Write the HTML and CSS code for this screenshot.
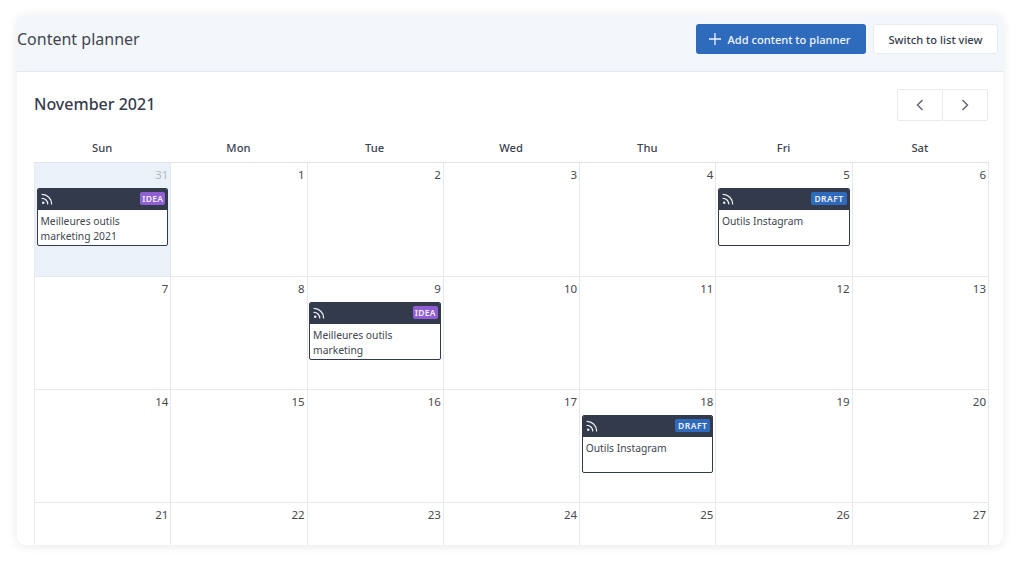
FILE: index.html
```html
<!DOCTYPE html>
<html lang="en">
<head>
<meta charset="utf-8">
<title>Content planner</title>
<link rel="stylesheet" href="styles.css">
</head>
<body>
<svg class="defs" width="0" height="0" aria-hidden="true">
  <symbol id="rss" viewBox="0 0 14 14">
    <circle cx="2.6" cy="11.4" r="1.5" fill="currentColor"/>
    <path d="M1.2 6.2a6.6 6.6 0 0 1 6.6 6.6M1.2 1.6a11.2 11.2 0 0 1 11.2 11.2" fill="none" stroke="currentColor" stroke-width="1.5" stroke-linecap="round"/>
  </symbol>
</svg>
<main class="card">
  <header class="topbar">
    <h1 class="title">Content planner</h1>
    <div class="actions">
      <button class="btn btn-primary">
        <svg class="plus" viewBox="0 0 12 12" width="12" height="12"><path d="M6 0v12M0 6h12" stroke="currentColor" stroke-width="1.3" fill="none"/></svg>
        Add content to planner
      </button>
      <button class="btn btn-light">Switch to list view</button>
    </div>
  </header>
  <section class="calendar">
    <div class="cal-head">
      <h2 class="month">November 2021</h2>
      <div class="nav">
        <button class="nav-btn"><svg viewBox="0 0 8 12" width="8" height="12"><path d="M6.5 1 1.5 6l5 5" stroke="currentColor" stroke-width="1.4" fill="none"/></svg></button>
        <button class="nav-btn"><svg viewBox="0 0 8 12" width="8" height="12"><path d="M1.5 1l5 5-5 5" stroke="currentColor" stroke-width="1.4" fill="none"/></svg></button>
      </div>
    </div>
    <div class="weekdays">
      <div>Sun</div><div>Mon</div><div>Tue</div><div>Wed</div><div>Thu</div><div>Fri</div><div>Sat</div>
    </div>
    <div class="grid">
      <div class="day other"><span class="num">31</span>
        <article class="event"><div class="event-bar"><svg class="rss" width="12" height="12"><use href="#rss"/></svg><span class="tag tag-idea">IDEA</span></div><p class="event-text">Meilleures outils marketing 2021</p></article>
      </div>
      <div class="day"><span class="num">1</span></div>
      <div class="day"><span class="num">2</span></div>
      <div class="day"><span class="num">3</span></div>
      <div class="day"><span class="num">4</span></div>
      <div class="day"><span class="num">5</span>
        <article class="event"><div class="event-bar"><svg class="rss" width="12" height="12"><use href="#rss"/></svg><span class="tag tag-draft">DRAFT</span></div><p class="event-text">Outils Instagram</p></article>
      </div>
      <div class="day"><span class="num">6</span></div>

      <div class="day"><span class="num">7</span></div>
      <div class="day"><span class="num">8</span></div>
      <div class="day"><span class="num">9</span>
        <article class="event"><div class="event-bar"><svg class="rss" width="12" height="12"><use href="#rss"/></svg><span class="tag tag-idea">IDEA</span></div><p class="event-text">Meilleures outils marketing</p></article>
      </div>
      <div class="day"><span class="num">10</span></div>
      <div class="day"><span class="num">11</span></div>
      <div class="day"><span class="num">12</span></div>
      <div class="day"><span class="num">13</span></div>

      <div class="day"><span class="num">14</span></div>
      <div class="day"><span class="num">15</span></div>
      <div class="day"><span class="num">16</span></div>
      <div class="day"><span class="num">17</span></div>
      <div class="day"><span class="num">18</span>
        <article class="event"><div class="event-bar"><svg class="rss" width="12" height="12"><use href="#rss"/></svg><span class="tag tag-draft">DRAFT</span></div><p class="event-text">Outils Instagram</p></article>
      </div>
      <div class="day"><span class="num">19</span></div>
      <div class="day"><span class="num">20</span></div>

      <div class="day"><span class="num">21</span></div>
      <div class="day"><span class="num">22</span></div>
      <div class="day"><span class="num">23</span></div>
      <div class="day"><span class="num">24</span></div>
      <div class="day"><span class="num">25</span></div>
      <div class="day"><span class="num">26</span></div>
      <div class="day"><span class="num">27</span></div>
    </div>
  </section>
</main>
</body>
</html>
```

FILE: styles.css
```css
* { box-sizing: border-box; }
html, body { height: 100%; }
body {
  margin: 0;
  padding: 15px 21px 19px 17px;
  background: #fff;
  color: #363d4d;
  font-family: "Noto Sans", "Open Sans", sans-serif;
  overflow: hidden;
}
.defs { position: absolute; }
.card {
  height: 530px;
  background: #fff;
  border-radius: 8px;
  box-shadow: 0 1px 10px rgba(40, 50, 70, 0.11);
  overflow: hidden;
  display: flex;
  flex-direction: column;
}
.topbar {
  height: 57px;
  flex: none;
  background: #f3f6fa;
  border-bottom: 1px solid #e5e8ec;
  display: flex;
  align-items: center;
  justify-content: space-between;
  padding: 0 5px 8px 0;
}
.title { margin: 0; font-size: 16px; font-weight: 400; color: #41474f; }
.actions { display: flex; gap: 7px; }
.btn {
  height: 30px;
  border-radius: 3px;
  font-family: inherit;
  font-size: 11.1px;
  font-weight: 500;
  display: flex;
  align-items: center;
  white-space: nowrap;
}
.btn-primary {
  width: 170px;
  justify-content: center;
  gap: 7px;
  padding: 0 3px 0 0;
  background: #2f6bbd;
  color: #f2f6fc;
  border: 0;
}
.btn-light {
  width: 125px;
  justify-content: center;
  background: #fff;
  color: #363d4d;
  border: 1px solid #e9ebef;
}
.calendar { flex: 1; min-height: 0; padding: 0 14px 0 17px; }
.cal-head {
  height: 63px;
  display: flex;
  align-items: center;
  justify-content: space-between;
  padding: 1px 1px 0 0;
}
.month { margin: 0; font-size: 16px; font-weight: 500; color: #363d4d; }
.nav { display: flex; margin-top: 2px; }
.nav-btn {
  width: 46px;
  height: 32px;
  background: #fff;
  border: 1px solid #e8eaee;
  color: #5d6470;
  display: flex;
  align-items: center;
  justify-content: center;
  padding: 0;
  border-radius: 2px;
}
.nav-btn + .nav-btn { margin-left: -1px; }
.weekdays {
  display: grid;
  grid-template-columns: repeat(7, 1fr);
  height: 27px;
  padding: 0 1px 2px 0;
  align-items: center;
  text-align: center;
  font-size: 11.2px;
  font-weight: 500;
  color: #3c424e;
}
.grid {
  display: grid;
  grid-template-columns: repeat(7, 1fr);
  grid-template-rows: 114px 113px 113px 113px;
  border-top: 1px solid #e2e4e8;
  border-left: 1px solid #e8eaed;
}
.day {
  border-right: 1px solid #e6e8eb;
  border-bottom: 1px solid #e6e8eb;
  padding: 4px 2px 0 1.5px;
  display: flex;
  flex-direction: column;
}
.day.other { background: #eaf1f9; }
.num {
  align-self: flex-end;
  font-size: 11.5px;
  line-height: 16px;
  color: #46494f;
  height: 21px;
}
.other .num { color: #b3b9c2; }
.event {
  height: 58px;
  background: #fff;
  border: 1px solid #333a4b;
  border-radius: 2px;
  overflow: hidden;
}
.event-bar {
  height: 21px;
  background: #333a4b;
  color: #e8ebf0;
  display: flex;
  align-items: center;
  justify-content: space-between;
  padding: 0 2px 2px 3px;
}
.rss { display: block; }
.tag {
  font-size: 8.5px;
  font-weight: 600;
  line-height: 13px;
  height: 13px;
  padding: 0 3px;
  border-radius: 2px;
  letter-spacing: 0.5px;
  color: #f3f0fa;
}
.tag-idea { background: #8f5fd3; padding: 0 2px; letter-spacing: 0.3px; }
.tag-draft { background: #2f6bbd; }
.event-text {
  margin: 0;
  padding: 4px 2px 0 3px;
  font-size: 10.3px;
  line-height: 15px;
  color: #41474f;
}
```
